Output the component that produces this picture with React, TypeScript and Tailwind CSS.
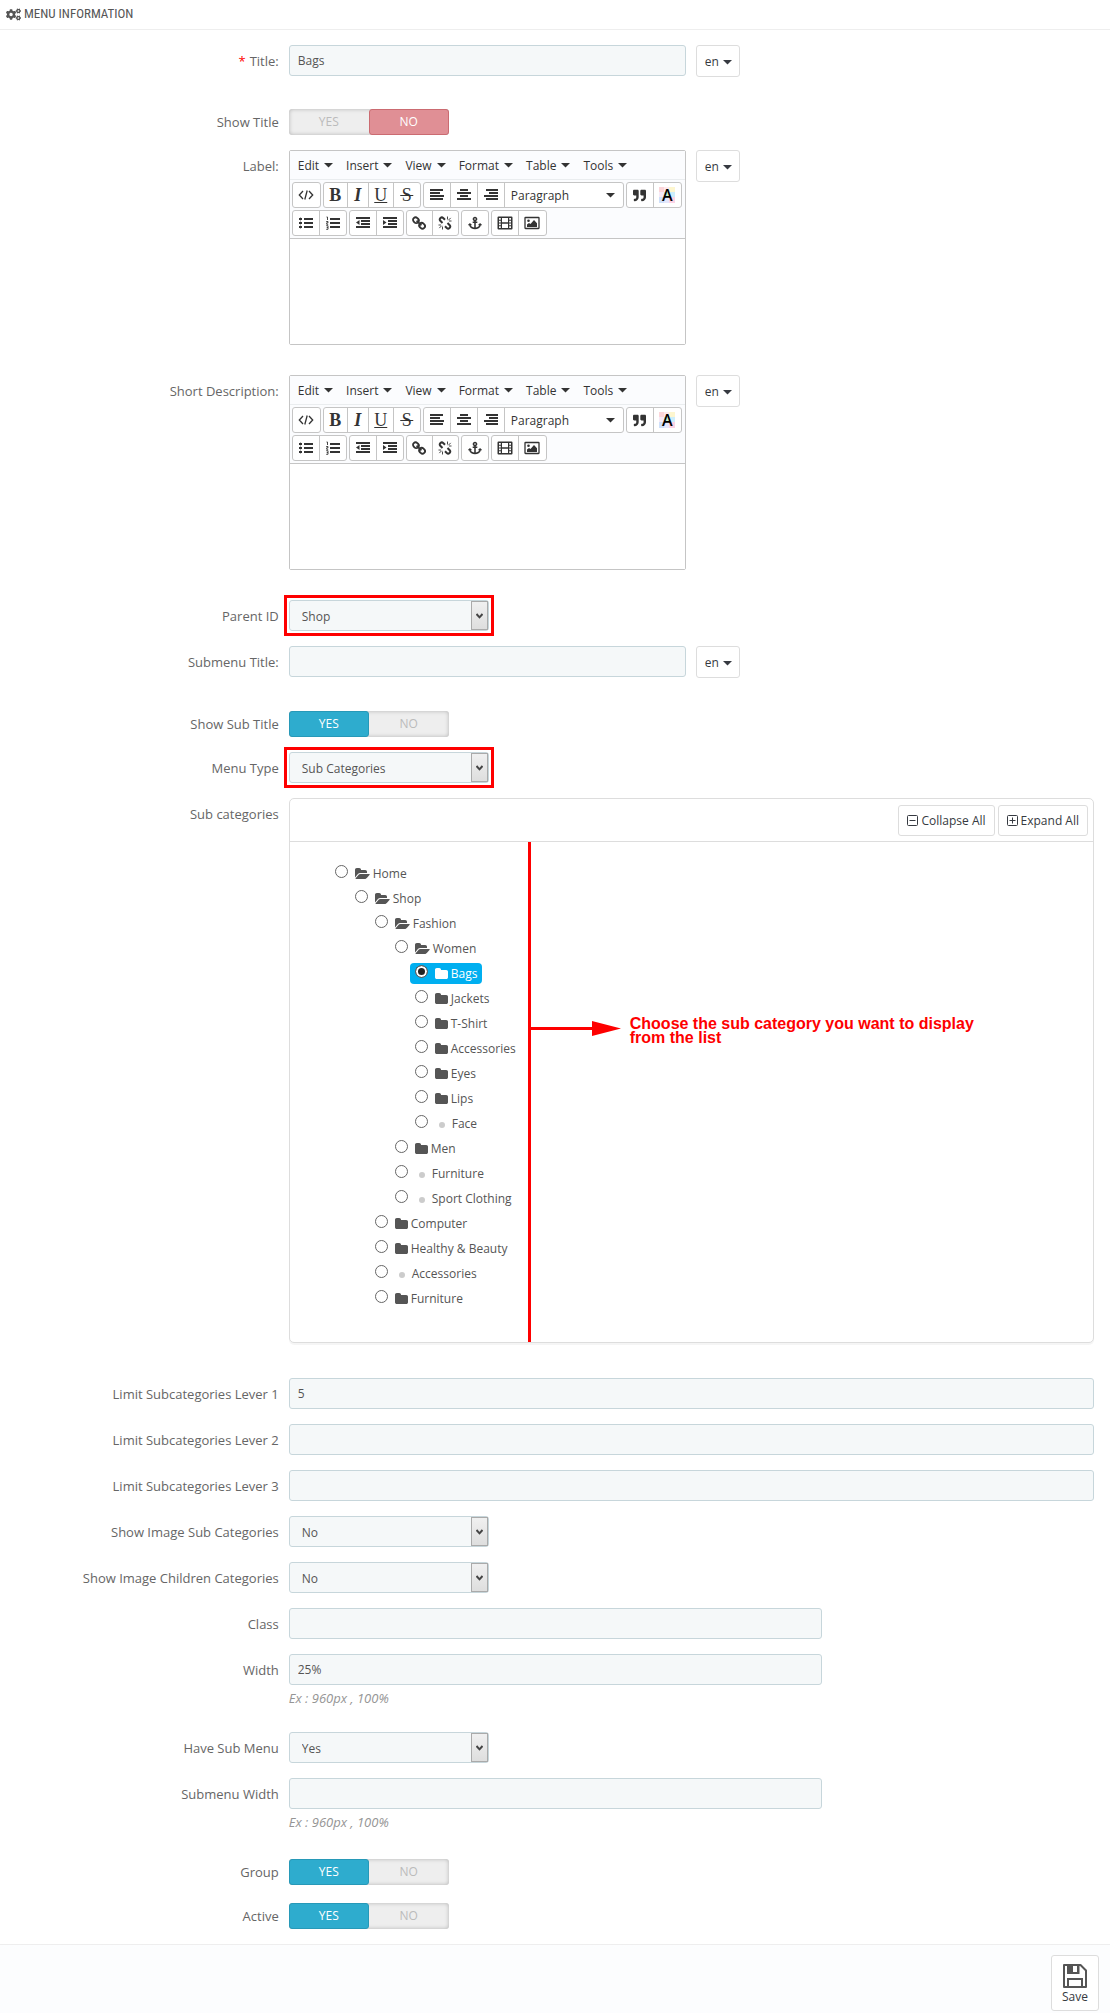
import { useState, type ReactNode } from 'react';
import clsx from 'clsx';
import { FaAnchor, FaCogs, FaQuoteRight } from 'react-icons/fa';

/* ---------- icons ---------- */

function Caret() {
  return (
    <svg width="9" height="5" viewBox="0 0 9 5" className="shrink-0" fill="currentColor" aria-hidden="true">
      <path d="M0 0h9L4.500 4.500z" />
    </svg>
  );
}

// Horizontal bars, each given as [x, y, width]
function Bars({ rows, children }: { rows: number[][]; children?: ReactNode }) {
  return (
    <svg width="14" height="14" viewBox="0 0 14 14" fill="currentColor" aria-hidden="true">
      {rows.map(([x, y, w]) => (
        <rect key={y} x={x} y={y} width={w} height="2" />
      ))}
      {children}
    </svg>
  );
}

function CodeIcon() {
  return (
    <svg width="16" height="12" viewBox="0 0 16 12" fill="none" stroke="currentColor" strokeWidth="1.3" aria-hidden="true">
      <path d="M5 2 1.300 6 5 10M11 2l3.700 4L11 10M9.200 1.500l-2.400 9" />
    </svg>
  );
}

function LinkIcon() {
  return (
    <svg width="14" height="14" viewBox="0 0 14 14" fill="none" stroke="currentColor" strokeWidth="1.900" aria-hidden="true">
      <rect x="1.400" y="1.200" width="5" height="6" rx="2.500" transform="rotate(-45 3.900 4.200)" />
      <rect x="7.600" y="6.800" width="5" height="6" rx="2.500" transform="rotate(-45 10.100 9.800)" />
      <path d="m4.600 4.600 4.800 4.800" />
    </svg>
  );
}

function UnlinkIcon() {
  return (
    <svg width="14" height="14" viewBox="0 0 14 14" fill="none" stroke="currentColor" aria-hidden="true">
      <g strokeWidth="2">
        <path d="M4.500 7 2.300 4.800a2 2 0 0 1 0-2.600l.2-.2a2 2 0 0 1 2.700 0L7 3.800" />
        <path d="m9.500 7 2.200 2.200a2 2 0 0 1 0 2.600l-.2.2a2 2 0 0 1-2.700 0L7 10.200" />
      </g>
      <path strokeWidth="0.900" d="M9.500 3.500V.5M10.300 4.300l2.400-2.400M11 5h2.500M4.500 10.500v3M3.700 9.700l-2.400 2.400M3 9H.5" />
    </svg>
  );
}

function FilmIcon() {
  return (
    <svg width="16" height="14" viewBox="0 0 16 14" aria-hidden="true">
      <path fill="currentColor" d="M1.500 0.500h13a1 1 0 0 1 1 1v11a1 1 0 0 1-1 1h-13a1 1 0 0 1-1-1v-11a1 1 0 0 1 1-1z" />
      <path fill="#fff" d="M5 2h6v4.300H5zM5 7.700h6v4.300H5zM2 2h1.800v1.700H2zM2 4.800h1.800v1.700H2zM2 7.500h1.800v1.700H2zM2 10.300h1.800V12H2zM12.200 2H14v1.700h-1.800zM12.200 4.800H14v1.700h-1.800zM12.200 7.500H14v1.700h-1.800zM12.200 10.300H14V12h-1.800z" />
    </svg>
  );
}

function ImageIcon() {
  return (
    <svg width="16" height="14" viewBox="0 0 16 14" aria-hidden="true">
      <rect x="1" y="1.500" width="14" height="11" rx="0.500" fill="#fff" stroke="currentColor" strokeWidth="1.300" />
      <path fill="currentColor" d="M3 11V8.500l2-1.500 1.500 1L10 4l3 3.200V11z" />
      <circle cx="4.500" cy="4.700" r="1.300" fill="currentColor" />
    </svg>
  );
}

function TextColorIcon() {
  return (
    <span className="grid place-items-center">
      <svg width="16" height="16" viewBox="0 0 16 16" className="col-start-1 row-start-1" aria-hidden="true">
        <path fill="#fbd5d9" d="M0 0h5v5H0z" />
        <path fill="#fde9ee" d="M5 0h5v5H5z" />
        <path fill="#fdf6cf" d="M10 0h6v5h-6z" />
        <path fill="#f6e9f7" d="M0 5h5v5H0z" />
        <path fill="#c9f2d0" d="M5 5h5v5H5z" />
        <path fill="#cdeefb" d="M10 5h6v5h-6z" />
        <path fill="#cfe0fa" d="M0 10h5v6H0z" />
        <path fill="#e4e6fb" d="M5 10h5v6H5z" />
        <path fill="#fbd3e6" d="M10 10h6v6h-6z" />
      </svg>
      <span className="col-start-1 row-start-1 text-[16px] leading-6 font-semibold text-black">A</span>
    </span>
  );
}

function FolderIcon() {
  return (
    <svg width="13" height="14" viewBox="0 0 1664 1792" className="shrink-0" fill="currentColor" aria-hidden="true">
      <path d="M1664 608v704q0 92-66 158t-158 66H224q-92 0-158-66T0 1312V352q0-92 66-158t158-66h320q92 0 158 66t66 158v32h672q92 0 158 66t66 158z" />
    </svg>
  );
}

function FolderOpenIcon() {
  return (
    <svg width="15" height="14" viewBox="0 0 1920 1792" className="shrink-0" fill="currentColor" aria-hidden="true">
      <path d="M1879 952q0 31-31 66l-336 396q-43 51-120.500 86.500T1248 1536H160q-34 0-60.500-13T73 1480q0-31 31-66l336-396q43-51 120.500-86.500T704 896h1088q34 0 60.500 13t26.500 43zm-343-344v160H704q-94 0-197 47.500T343 935L6 1331l-5 6q0-4-.5-12.500T0 1312V352q0-92 66-158t158-66h320q92 0 158 66t66 158v32h544q92 0 158 66t66 158z" />
    </svg>
  );
}

function SquareIcon({ plus }: { plus?: boolean }) {
  return (
    <svg width="11" height="11" viewBox="0 0 11 11" className="shrink-0" fill="none" stroke="currentColor" aria-hidden="true">
      <rect x="0.500" y="0.500" width="10" height="10" rx="1" />
      <path d={plus ? 'M2.500 5.500h6M5.500 2.500v6' : 'M2.500 5.500h6'} />
    </svg>
  );
}

function SaveIcon() {
  return (
    <svg width="24" height="24" viewBox="0 0 24 24" aria-hidden="true">
      <path fill="none" stroke="currentColor" strokeWidth="2" strokeLinejoin="round" d="M1 1h16.500L23 6.500V23H1z" />
      <path fill="currentColor" d="M4 1h12.500v9H4z" />
      <path fill="#fff" d="M10 2h4v6h-4z" />
      <path fill="none" stroke="currentColor" strokeWidth="2" d="M5 23v-8h14v8" />
    </svg>
  );
}

/* ---------- form pieces ---------- */

const inputClass =
  'block h-[31px] w-full rounded-[3px] border border-[#c7d6db] bg-[#f5f8f9] px-2 pb-px text-[12px] text-[#555] outline-none';

type RowProps = { label: string; htmlFor?: string; required?: boolean; className?: string; children: ReactNode };

function Row({ label, htmlFor, required, className, children }: RowProps) {
  return (
    <div className={clsx('flex items-start', className ?? 'mb-[15px]')}>
      <div className="w-1/4 shrink-0 px-[5px] pt-[7px] text-right leading-[18px] text-[#666]">
        {required && <span className="mr-1 text-[#f00]">*</span>}
        <label htmlFor={htmlFor}>{label}</label>
      </div>
      <div className="min-w-0 flex-1">{children}</div>
    </div>
  );
}

function LangButton() {
  return (
    <button type="button" className="flex h-8 w-11 items-center justify-center gap-1 rounded-[3px] border border-[#ddd] bg-white pt-[2px] text-[12px] text-[#363a41]">
      en
      <Caret />
    </button>
  );
}

function Translatable({ children }: { children: ReactNode }) {
  return (
    <div className="flex items-start">
      <div className="w-1/2 px-[5px]">{children}</div>
      <div className="px-[5px]">
        <LangButton />
      </div>
    </div>
  );
}

function Select({ id, options, marked }: { id: string; options: string[]; marked?: boolean }) {
  return (
    <div className="px-[5px]">
      <div className={clsx('grid w-[200px]', marked && 'outline-3 outline-offset-2 outline-[#fe0000]')}>
        <select
          id={id}
          className="col-start-1 row-start-1 h-[31px] w-full appearance-none rounded-[3px] border border-[#c7d6db] bg-[#f5f8f9] pt-[2px] pl-3 text-[12px] text-[#555] outline-none"
        >
          {options.map((option) => (
            <option key={option}>{option}</option>
          ))}
        </select>
        <span className="pointer-events-none col-start-1 row-start-1 my-px mr-px flex w-[17px] items-center justify-center justify-self-end border border-[#aaa] bg-linear-to-b from-[#f0f0f0] to-[#dedede]">
          <svg width="7" height="6" viewBox="0 0 7 6" fill="none" stroke="#444" strokeWidth="2" aria-hidden="true">
            <path d="M0.500 1 3.500 4.300 6.500 1" />
          </svg>
        </span>
      </div>
    </div>
  );
}

function Switch({ name, initial }: { name: string; initial: 'YES' | 'NO' }) {
  const [value, setValue] = useState(initial);
  const active = value === 'YES' ? 'border-[#2799b8] bg-[#2eacce] text-white' : 'border-[#cb6b71] bg-[#e08f95] text-white';

  return (
    <div className="px-[5px] pt-[3px]">
      <div
        role="radiogroup"
        aria-label={name}
        className="relative flex h-[26px] w-40 rounded-[3px] bg-[#eee] text-[12px] shadow-[inset_0_0_4px_rgba(0,0,0,0.25)]"
      >
        {(['YES', 'NO'] as const).map((option) => (
          <label
            key={option}
            className={clsx(
              'w-1/2 rounded-[3px] border text-center leading-[23px]',
              value === option ? active : 'border-transparent text-[#bbb]'
            )}
          >
            <input type="radio" name={name} className="sr-only" checked={value === option} onChange={() => setValue(option)} />
            {option}
          </label>
        ))}
      </div>
    </div>
  );
}

/* ---------- rich text editor ---------- */

function Group({ children }: { children: ReactNode }) {
  return <div className="flex h-[26px] divide-x divide-[#c5c5c5] rounded-[3px] border border-[#c5c5c5] bg-white">{children}</div>;
}

function Tool({ title, className, children }: { title: string; className?: string; children: ReactNode }) {
  return (
    <button type="button" title={title} className={clsx('flex items-center justify-center', className ?? 'w-[27px]')}>
      {children}
    </button>
  );
}

const glyph = "font-['Liberation_Serif',serif] text-[18px] leading-5";

function Editor({ id }: { id: string }) {
  return (
    <div className="rounded-[2px] border border-[#c5c5c5] text-[12px] text-[#333]">
      <div className="flex h-[29px] items-center border-b border-[#eaedef] bg-[#fbfcfe] pt-px pl-2">
        {['Edit', 'Insert', 'View', 'Format', 'Table', 'Tools'].map((item) => (
          <button key={item} type="button" className="mr-[13px] flex items-center gap-[5px]">
            {item}
            <Caret />
          </button>
        ))}
      </div>
      <div className="space-y-[2px] border-b border-[#c5c5c5] bg-[#fbfcfe] p-[2px]">
        <div className="flex gap-[2px]">
          <Group>
            <Tool title="Source code"><CodeIcon /></Tool>
          </Group>
          <Group>
            <Tool title="Bold" className="w-6"><span className={clsx(glyph, 'font-bold')}>B</span></Tool>
            <Tool title="Italic" className="w-[21px]"><span className={clsx(glyph, 'font-bold italic')}>I</span></Tool>
            <Tool title="Underline" className="w-[25px]"><span className={clsx(glyph, 'underline')}>U</span></Tool>
            <Tool title="Strikethrough" className="w-[26px]"><span className={clsx(glyph, 'line-through')}>{'\u200AS\u200A'}</span></Tool>
          </Group>
          <Group>
            <Tool title="Align left"><Bars rows={[[0, 1, 13], [0, 4, 10], [0, 7, 14], [0, 10, 13]]} /></Tool>
            <Tool title="Align center"><Bars rows={[[3, 1, 8], [0, 4, 14], [3, 7, 8], [0, 10, 14]]} /></Tool>
            <Tool title="Align right"><Bars rows={[[2, 1, 12], [5, 4, 9], [0, 7, 14], [2, 10, 12]]} /></Tool>
            <div className="grid w-[118px] items-center">
              <select aria-label="Block format" className="col-start-1 row-start-1 h-6 w-full appearance-none bg-transparent pt-[2px] pl-[6px] outline-none">
                <option>Paragraph</option>
              </select>
              <span className="pointer-events-none col-start-1 row-start-1 mr-2 justify-self-end"><Caret /></span>
            </div>
          </Group>
          <Group>
            <Tool title="Blockquote"><FaQuoteRight size={13} /></Tool>
            <Tool title="Text color"><TextColorIcon /></Tool>
          </Group>
        </div>
        <div className="flex gap-[2px]">
          <Group>
            <Tool title="Bullet list">
              <Bars rows={[[5, 2, 9], [5, 6, 9], [5, 10, 9]]}>
                <path d="M0 2h3v2H0zM0 6h3v2H0zM0 10h3v2H0z" />
                <path d="M1 1h1v12H1z" opacity="0.350" />
              </Bars>
            </Tool>
            <Tool title="Numbered list" className="w-[26px]">
              <Bars rows={[[4, 2, 10], [4, 6, 10], [4, 10, 10]]}>
                <path fill="none" stroke="currentColor" strokeWidth="0.900" d="M.5 1h1v3M.2 5.500h1.800v1.300H.7v1.500H2.200M.2 9.700h1.800v3.600H.2M.7 11.500H2" />
              </Bars>
            </Tool>
          </Group>
          <Group>
            <Tool title="Decrease indent">
              <Bars rows={[[0, 1, 14], [5, 4, 9], [5, 7, 9], [0, 10, 14]]}><path d="M3.500 4v5L0 6.500z" /></Bars>
            </Tool>
            <Tool title="Increase indent" className="w-[26px]">
              <Bars rows={[[0, 1, 14], [5, 4, 9], [5, 7, 9], [0, 10, 14]]}><path d="M0 4v5l3.500-2.500z" /></Bars>
            </Tool>
          </Group>
          <Group>
            <Tool title="Insert link" className="w-[26px]"><LinkIcon /></Tool>
            <Tool title="Remove link" className="w-[25px]"><UnlinkIcon /></Tool>
          </Group>
          <Group>
            <Tool title="Anchor" className="w-[26px]"><FaAnchor size={14} /></Tool>
          </Group>
          <Group>
            <Tool title="Insert video"><FilmIcon /></Tool>
            <Tool title="Insert image"><ImageIcon /></Tool>
          </Group>
        </div>
      </div>
      <textarea id={id} className="block h-[105px] w-full resize-none bg-white p-2 outline-none" />
    </div>
  );
}

/* ---------- category tree ---------- */

type Category = { id: string; name: string; icon: 'open' | 'closed' | 'leaf'; children?: Category[] };

const categories: Category[] = [
  {
    id: 'home', name: 'Home', icon: 'open', children: [
      {
        id: 'shop', name: 'Shop', icon: 'open', children: [
          {
            id: 'fashion', name: 'Fashion', icon: 'open', children: [
              {
                id: 'women', name: 'Women', icon: 'open', children: [
                  { id: 'bags', name: 'Bags', icon: 'closed' },
                  { id: 'jackets', name: 'Jackets', icon: 'closed' },
                  { id: 't-shirt', name: 'T-Shirt', icon: 'closed' },
                  { id: 'women-accessories', name: 'Accessories', icon: 'closed' },
                  { id: 'eyes', name: 'Eyes', icon: 'closed' },
                  { id: 'lips', name: 'Lips', icon: 'closed' },
                  { id: 'face', name: 'Face', icon: 'leaf' }
                ]
              },
              { id: 'men', name: 'Men', icon: 'closed' },
              { id: 'fashion-furniture', name: 'Furniture', icon: 'leaf' },
              { id: 'sport', name: 'Sport Clothing', icon: 'leaf' }
            ]
          },
          { id: 'computer', name: 'Computer', icon: 'closed' },
          { id: 'beauty', name: 'Healthy & Beauty', icon: 'closed' },
          { id: 'accessories', name: 'Accessories', icon: 'leaf' },
          { id: 'furniture', name: 'Furniture', icon: 'closed' }
        ]
      }
    ]
  }
];

type TreeProps = { items: Category[]; selected: string; onSelect: (id: string) => void };

function Tree({ items, selected, onSelect }: TreeProps) {
  return (
    <ul>
      {items.map((item) => (
        <li key={item.id}>
          <label
            className={clsx(
              'mb-1 flex h-[21px] w-fit items-start gap-[3px] rounded-[4px] px-[5px] text-[12px] leading-[22px] whitespace-nowrap',
              selected === item.id ? 'bg-[#00aff0] text-white' : 'text-[#555]'
            )}
          >
            <input
              type="radio"
              name="category"
              checked={selected === item.id}
              onChange={() => onSelect(item.id)}
              className="mt-[2px] mr-1 size-[13px] shrink-0 appearance-none rounded-full border border-[#666] bg-white checked:bg-[#222] checked:shadow-[inset_0_0_0_2px_#fff]"
            />
            <span className="flex h-[21px] items-center">
              {item.icon === 'open' && <FolderOpenIcon />}
              {item.icon === 'closed' && <FolderIcon />}
              {item.icon === 'leaf' && <span className="mx-1 mt-[2px] size-[6px] rounded-full bg-[#ccc]" />}
            </span>
            {item.name}
          </label>
          {item.children && (
            <div className="pl-5">
              <Tree items={item.children} selected={selected} onSelect={onSelect} />
            </div>
          )}
        </li>
      ))}
    </ul>
  );
}

const panelButton = 'flex h-[31px] items-center gap-[3px] rounded-[3px] border border-[#ddd] bg-white px-2 pt-px text-[12px] text-[#363a41]';

function CategoryPanel() {
  const [selected, setSelected] = useState('bags');

  return (
    <div className="mx-[5px] rounded-[5px] border border-[#ddd] bg-white shadow-[0_2px_0_rgba(0,0,0,0.04)]">
      <div className="flex h-[43px] items-center justify-end gap-[3px] border-b border-[#ddd] pr-[5px]">
        <button type="button" className={panelButton}>
          <SquareIcon />
          Collapse All
        </button>
        <button type="button" className={panelButton}>
          <SquareIcon plus />
          Expand All
        </button>
      </div>
      <div className="flex items-start">
        <div className="w-[241px] shrink-0 border-r-3 border-[#fe0000] pt-[21px] pb-[29px] pl-10">
          <Tree items={categories} selected={selected} onSelect={setSelected} />
        </div>
        <div className="flex items-start pt-[175px]">
          <svg width="90" height="15" viewBox="0 0 90 15" className="mt-1 shrink-0" fill="#fe0000" aria-hidden="true">
            <path d="M0 6h61V0l29 7.500L61 15V9H0z" />
          </svg>
          <p className="ml-[9px] w-[360px] font-['Liberation_Sans',Arial,sans-serif] text-[16px] leading-[14px] font-bold text-[#fe0000]">
            Choose the sub category you want to display from the list
          </p>
        </div>
      </div>
    </div>
  );
}

function Hint() {
  return <p className="mt-1 pb-[10px] leading-[18px] text-[#959595] italic">Ex : 960px , 100%</p>;
}

export default function App() {
  return (
    <form className="bg-white font-['Open_Sans',sans-serif] text-[13px] leading-[18px]" onSubmit={(e) => e.preventDefault()}>
      <h3 className="flex h-[30px] items-center gap-[3px] border-b border-[#eee] pb-px pl-[6px] font-['Liberation_Sans_Narrow','Roboto_Condensed','Open_Sans',sans-serif] text-[13px] text-[#555]">
        <FaCogs size={15} />
        MENU INFORMATION
      </h3>

      <div className="pt-[15px] pr-[11px] pl-3">
        <Row label="Title:" htmlFor="title" required className="mb-[29px]">
          <Translatable>
            <input id="title" defaultValue="Bags" className={inputClass} />
          </Translatable>
        </Row>
        <Row label="Show Title">
          <Switch name="Show Title" initial="NO" />
        </Row>
        <Row label="Label:" htmlFor="label" className="mb-[30px]">
          <Translatable>
            <Editor id="label" />
          </Translatable>
        </Row>
        <Row label="Short Description:" htmlFor="description" className="mb-[30px]">
          <Translatable>
            <Editor id="description" />
          </Translatable>
        </Row>
        <Row label="Parent ID" htmlFor="parent">
          <Select id="parent" options={['Shop']} marked />
        </Row>
        <Row label="Submenu Title:" htmlFor="submenu-title" className="mb-[30px]">
          <Translatable>
            <input id="submenu-title" className={inputClass} />
          </Translatable>
        </Row>
        <Row label="Show Sub Title">
          <Switch name="Show Sub Title" initial="YES" />
        </Row>
        <Row label="Menu Type" htmlFor="menu-type">
          <Select id="menu-type" options={['Sub Categories']} marked />
        </Row>
        <Row label="Sub categories" className="mb-[35px]">
          <CategoryPanel />
        </Row>
        {['5', '', ''].map((value, i) => (
          <Row key={i} label={`Limit Subcategories Lever ${i + 1}`} htmlFor={`limit-${i + 1}`}>
            <div className="px-[5px]">
              <input id={`limit-${i + 1}`} defaultValue={value} className={inputClass} />
            </div>
          </Row>
        ))}
        <Row label="Show Image Sub Categories" htmlFor="image-sub">
          <Select id="image-sub" options={['No', 'Yes']} />
        </Row>
        <Row label="Show Image Children Categories" htmlFor="image-children">
          <Select id="image-children" options={['No', 'Yes']} />
        </Row>
        <Row label="Class" htmlFor="class">
          <div className="w-2/3 px-[5px]">
            <input id="class" className={inputClass} />
          </div>
        </Row>
        <Row label="Width" htmlFor="width">
          <div className="w-2/3 px-[5px]">
            <input id="width" defaultValue="25%" className={inputClass} />
            <Hint />
          </div>
        </Row>
        <Row label="Have Sub Menu" htmlFor="have-sub">
          <Select id="have-sub" options={['Yes', 'No']} />
        </Row>
        <Row label="Submenu Width" htmlFor="submenu-width">
          <div className="w-2/3 px-[5px]">
            <input id="submenu-width" className={inputClass} />
            <Hint />
          </div>
        </Row>
        <Row label="Group">
          <Switch name="Group" initial="YES" />
        </Row>
        <Row label="Active">
          <Switch name="Active" initial="YES" />
        </Row>
      </div>

      <div className="flex justify-end border-t border-[#eee] bg-[#fcfdfe] pt-[10px] pr-[11px] pb-[2px]">
        <button type="submit" className="flex h-14 w-12 flex-col items-center rounded-[3px] border border-[#ddd] bg-white pt-2 text-[12px] text-[#363a41]">
          <span className="text-[#555]">
            <SaveIcon />
          </span>
          Save
        </button>
      </div>
    </form>
  );
}
